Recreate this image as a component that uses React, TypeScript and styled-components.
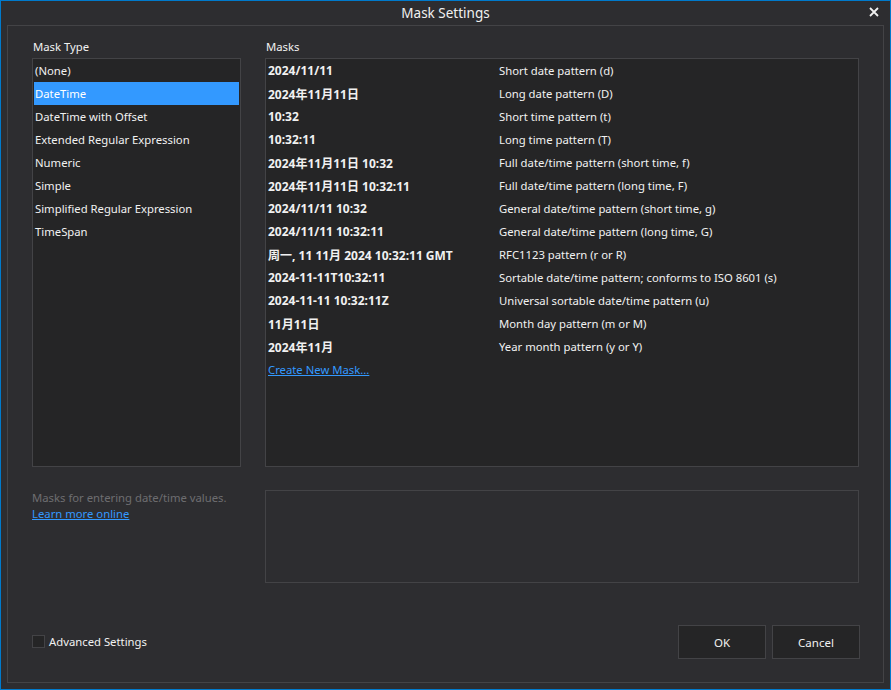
import { createGlobalStyle } from "styled-components"
import styled from "styled-components"

const GlobalStyle = createGlobalStyle`
  html, body {
    margin: 0;
    padding: 0;
    background: #2d2d30;
  }
  * { box-sizing: border-box; }
`

const Window = styled.div`
  width: 891px;
  height: 690px;
  border: solid 1px #007acc;
  background-color: #2d2d30;
  display: flex;
  flex-direction: column;
  font-family: "Noto Sans", "Noto Sans CJK SC", sans-serif;
  font-size: 11.3px;
  color: #f1f1f1;
`

const TitleBar = styled.div`
  height: 24px;
  flex-shrink: 0;
  position: relative;
  display: flex;
  align-items: center;
  justify-content: center;
  font-size: 13.5px;
  color: #f1f1f1;
`

const CloseButton = styled.div`
  position: absolute;
  right: 10px;
  top: 5px;
  width: 12px;
  height: 12px;
  display: flex;
`

const Frame = styled.div`
  flex: 1;
  margin: 0 6px 6px 6px;
  border: solid 1px #434346;
  padding: 13px 24px 23px 24px;
  display: flex;
  flex-direction: column;
`

const Columns = styled.div`
  display: grid;
  grid-template-columns: 209px 594px;
  column-gap: 24px;
`

const Label = styled.div`
  height: 19px;
  line-height: 16px;
  padding-left: 1px;
`

const ListBox = styled.div<{ $height: number }>`
  height: ${props => props.$height}px;
  background-color: #252526;
  border: solid 1px #434346;
  padding: 0 1px;
  overflow: hidden;
`

const Item = styled.div<{ $selected?: boolean }>`
  height: 23px;
  line-height: 23px;
  padding-left: 1px;
  background-color: ${props => props.$selected ? "#3399ff" : "transparent"};
  color: ${props => props.$selected ? "#ffffff" : "#f1f1f1"};
`

const MaskRow = styled.div`
  height: 23px;
  display: grid;
  grid-template-columns: 231px 1fr;
  align-items: center;
  padding-left: 1px;
`

const MaskValue = styled.span`
  font-weight: bold;
  font-size: 12px;
`

const Link = styled.a`
  color: #3399ff;
  text-decoration: underline;
  cursor: pointer;
`

const CreateLink = styled(Link)`
  display: block;
  height: 23px;
  line-height: 23px;
  padding-left: 1px;
`

const Lower = styled.div`
  margin-top: 23px;
  display: grid;
  grid-template-columns: 209px 594px;
  column-gap: 24px;
`

const Description = styled.div`
  color: #6d6d70;
  line-height: 16px;
`

const DescLink = styled(Link)`
  display: block;
`

const PreviewBox = styled.div`
  height: 93px;
  border: solid 1px #434346;
  background-color: #2d2d30;
`

const Footer = styled.div`
  margin-top: auto;
  display: flex;
  align-items: center;
`

const CheckLabel = styled.label`
  display: flex;
  align-items: center;
  gap: 4px;
  margin-top: -2px;
`

const CheckBox = styled.span`
  width: 13px;
  height: 13px;
  border: solid 1px #434346;
  background-color: #252526;
`

const Buttons = styled.div`
  margin-left: auto;
  margin-right: -1px;
  display: flex;
  gap: 6px;
`

const Button = styled.button`
  width: 88px;
  height: 34px;
  background-color: #252526;
  border: solid 1px #434346;
  color: #f1f1f1;
  font-family: inherit;
  font-size: 11.5px;
`

const maskTypes = [
  "(None)",
  "DateTime",
  "DateTime with Offset",
  "Extended Regular Expression",
  "Numeric",
  "Simple",
  "Simplified Regular Expression",
  "TimeSpan",
]

const masks: [string, string][] = [
  ["2024/11/11", "Short date pattern (d)"],
  ["2024年11月11日", "Long date pattern (D)"],
  ["10:32", "Short time pattern (t)"],
  ["10:32:11", "Long time pattern (T)"],
  ["2024年11月11日 10:32", "Full date/time pattern (short time, f)"],
  ["2024年11月11日 10:32:11", "Full date/time pattern (long time, F)"],
  ["2024/11/11 10:32", "General date/time pattern (short time, g)"],
  ["2024/11/11 10:32:11", "General date/time pattern (long time, G)"],
  ["周一, 11 11月 2024 10:32:11 GMT", "RFC1123 pattern (r or R)"],
  ["2024-11-11T10:32:11", "Sortable date/time pattern; conforms to ISO 8601 (s)"],
  ["2024-11-11 10:32:11Z", "Universal sortable date/time pattern (u)"],
  ["11月11日", "Month day pattern (m or M)"],
  ["2024年11月", "Year month pattern (y or Y)"],
]

export default function App() {
  return (
    <>
      <GlobalStyle />
      <Window>
        <TitleBar>
          Mask Settings
          <CloseButton>
            <svg width="12" height="12" viewBox="0 0 12 12">
              <path d="M2 2 L10 10 M10 2 L2 10" stroke="#f1f1f1" strokeWidth="1.8" />
            </svg>
          </CloseButton>
        </TitleBar>
        <Frame>
          <Columns>
            <div>
              <Label>Mask Type</Label>
              <ListBox $height={409}>
                {maskTypes.map(t => (
                  <Item key={t} $selected={t === "DateTime"}>{t}</Item>
                ))}
              </ListBox>
            </div>
            <div>
              <Label>Masks</Label>
              <ListBox $height={409}>
                {masks.map(([value, desc]) => (
                  <MaskRow key={desc}>
                    <MaskValue>{value}</MaskValue>
                    <span>{desc}</span>
                  </MaskRow>
                ))}
                <CreateLink>Create New Mask...</CreateLink>
              </ListBox>
            </div>
          </Columns>
          <Lower>
            <Description>
              Masks for entering date/time values.
              <DescLink>Learn more online</DescLink>
            </Description>
            <PreviewBox />
          </Lower>
          <Footer>
            <CheckLabel>
              <CheckBox />
              Advanced Settings
            </CheckLabel>
            <Buttons>
              <Button>OK</Button>
              <Button>Cancel</Button>
            </Buttons>
          </Footer>
        </Frame>
      </Window>
    </>
  )
}
